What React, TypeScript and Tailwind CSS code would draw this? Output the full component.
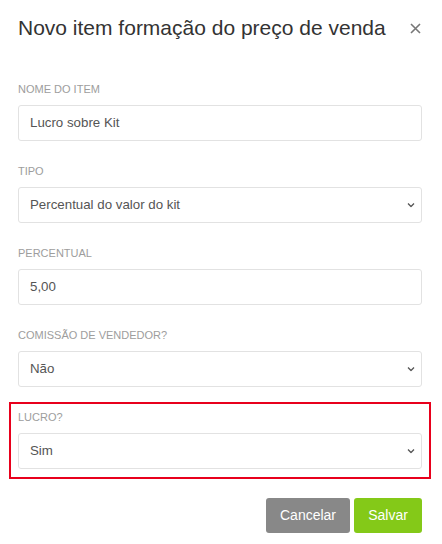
import React from "react";

type Field = {
  label: string;
  value: string;
  kind: "input" | "select";
  highlight?: boolean;
};

const fields: Field[] = [
  { label: "Nome do item", value: "Lucro sobre Kit", kind: "input" },
  { label: "Tipo", value: "Percentual do valor do kit", kind: "select" },
  { label: "Percentual", value: "5,00", kind: "input" },
  { label: "Comissão de vendedor?", value: "Não", kind: "select" },
  { label: "Lucro?", value: "Sim", kind: "select", highlight: true },
];

function Chevron() {
  return (
    <svg width="8" height="5" viewBox="0 0 8 5" className="absolute right-[6px] top-1/2 -translate-y-1/2">
      <path d="M1 1l3 3l3-3" fill="none" stroke="#555" strokeWidth="1.3" />
    </svg>
  );
}

function FieldBox({ field }: { field: Field }) {
  return (
    <div>
      <div className="h-4 mb-[7px] text-[11px] leading-[14px] uppercase text-[#9d9d9d]">{field.label}</div>
      <div className="relative h-9 flex items-center px-[11px] border border-[#e2e2e2] rounded-[3px] bg-white text-[13.3px] text-[#555]">
        {field.value}
        {field.kind === "select" && <Chevron />}
      </div>
    </div>
  );
}

export default function App() {
  return (
    <div className="w-[442px] h-[544px] bg-white pl-[18px] pr-[20px] pt-[14px] font-['Liberation_Sans',Arial,sans-serif]">
      {/* cabeçalho */}
      <div className="flex items-start justify-between">
        <h1 className="text-[21px] leading-7 text-[#333]">Novo item formação do preço de venda</h1>
        <button className="mt-[9px] mr-[1px] text-[#777]">
          <svg width="11" height="11" viewBox="0 0 11 11">
            <path d="M1 1l9 9M10 1l-9 9" stroke="currentColor" strokeWidth="1.6" />
          </svg>
        </button>
      </div>

      {/* formulário */}
      <div className="mt-[40px] flex flex-col">
        {fields.map((f, i) =>
          f.highlight ? (
            <div
              key={i}
              className="-mx-[9px] -mt-[8px] mb-[19px] px-[7px] pt-[6px] pb-[8px] border-2 border-[#e8001c]"
            >
              <FieldBox field={f} />
            </div>
          ) : (
            <div key={i} className="mb-[23px]">
              <FieldBox field={f} />
            </div>
          )
        )}
      </div>

      <div className="flex justify-end gap-1">
        <button className="h-[35px] w-[84px] rounded-[3px] bg-[#888] text-white text-[14px]">Cancelar</button>
        <button className="h-[35px] w-[68px] rounded-[3px] bg-[#84c918] text-white text-[14px]">Salvar</button>
      </div>
    </div>
  );
}
